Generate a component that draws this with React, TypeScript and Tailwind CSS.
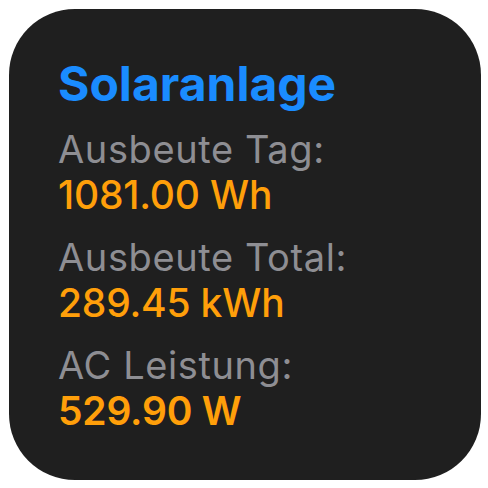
const rows = [
  { label: "Ausbeute Tag:", value: "1081.00 Wh", weight: "font-medium" },
  { label: "Ausbeute Total:", value: "289.45 kWh", weight: "font-medium" },
  { label: "AC Leistung:", value: "529.90 W", weight: "font-semibold" },
];

export default function App() {
  return (
    <div className="min-h-screen bg-white p-[9px] font-['Inter',sans-serif]">
      <div className="flex h-[471px] w-[472px] flex-col rounded-[66px] bg-[#1f1f1f] pl-[49px] pt-[47px]">
        <h1 className="text-[48px] font-bold leading-[56px] text-[#1a8cff]">Solaranlage</h1>
        <div className="mt-[14px] flex flex-col gap-[16px]">
          {rows.map((r) => (
            <div key={r.label} className="flex flex-col">
              <span className="text-[38px] leading-[46px] tracking-[0.6px] text-[#8e8e93]">
                {r.label}
              </span>
              <span
                className={`text-[39px] leading-[46px] tracking-[-0.2px] text-[#ff9f0a] ${r.weight}`}
              >
                {r.value}
              </span>
            </div>
          ))}
        </div>
      </div>
    </div>
  );
}
